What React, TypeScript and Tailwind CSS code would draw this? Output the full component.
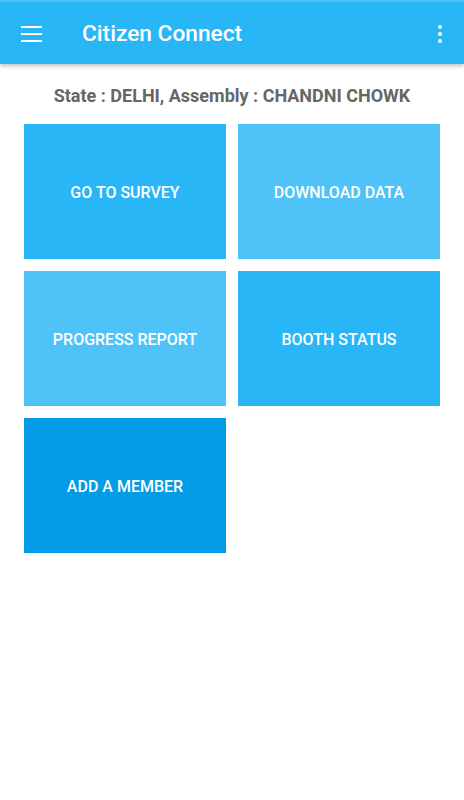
import React from "react";

const tiles = [
  { label: "GO TO SURVEY", bg: "bg-[#29b6f6]" },
  { label: "DOWNLOAD DATA", bg: "bg-[#4fc3f7]" },
  { label: "PROGRESS REPORT", bg: "bg-[#4fc3f7]" },
  { label: "BOOTH STATUS", bg: "bg-[#29b6f6]" },
  { label: "ADD A MEMBER", bg: "bg-[#039be5]" },
];

export default function App() {
  return (
    <div className="w-[464px] h-[800px] bg-white flex flex-col font-['Roboto',sans-serif]">
      <div className="relative z-10 h-[64px] bg-[#29b6f6] border-t-2 border-[#4fc3f7] shadow-[0_2px_4px_rgba(0,0,0,0.25)] flex items-center pl-[21px] pr-[22px] pt-[2px]">
        <svg width="21" height="16" viewBox="0 0 21 16" className="shrink-0">
          <rect x="0" y="0" width="21" height="2" fill="white" />
          <rect x="0" y="7" width="21" height="2" fill="white" />
          <rect x="0" y="14" width="21" height="2" fill="white" />
        </svg>
        <div className="ml-[40px] text-white text-[22.7px] font-medium leading-none">Citizen Connect</div>
        <div className="ml-auto flex flex-col gap-[3px]">
          <span className="w-[4px] h-[4px] rounded-full bg-white" />
          <span className="w-[4px] h-[4px] rounded-full bg-white" />
          <span className="w-[4px] h-[4px] rounded-full bg-white" />
        </div>
      </div>
      <div className="text-center text-[#666666] text-[18px] font-bold mt-[21px] leading-[22px]">
        State : DELHI, Assembly : CHANDNI CHOWK
      </div>
      <div className="grid grid-cols-[202px_202px] gap-x-[12px] gap-y-[12px] px-[24px] mt-[17px]">
        {tiles.map((t) => (
          <div
            key={t.label}
            className={`${t.bg} h-[135px] flex items-center justify-center text-white text-[16px] font-medium pt-[2px]`}
          >
            {t.label}
          </div>
        ))}
      </div>
    </div>
  );
}
